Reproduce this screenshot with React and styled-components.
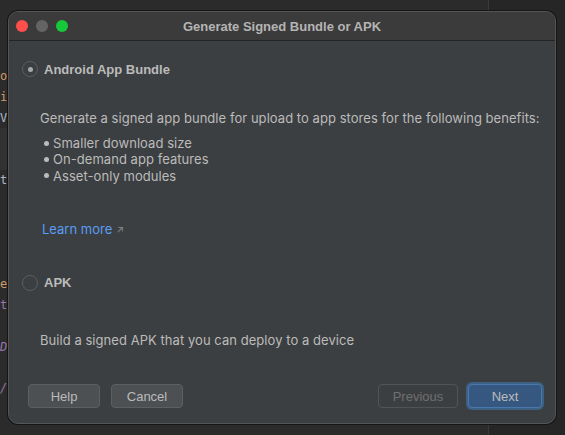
import React from "react";
import styled, { createGlobalStyle } from "styled-components";

const GlobalStyle = createGlobalStyle`
  html, body {
    margin: 0;
    padding: 0;
    background: #232323;
    font-family: "Liberation Sans", Arial, sans-serif;
    -webkit-font-smoothing: antialiased;
  }
`;

const Desktop = styled.div`
  position: relative;
  width: 565px;
  height: 435px;
  overflow: hidden;
  display: flex;
  background: #232323;
`;

const EditorPane = styled.div`
  width: 489px;
  height: 100%;
  background: #2b2b2b;
  border-right: 1px solid #3a3a3a;
  padding-top: 66px;
  box-sizing: border-box;
`;

const SidePane = styled.div`
  flex: 1;
  background: #262626;
`;

const CodeLine = styled.div`
  width: 8px;
  height: 20.8px;
  display: flex;
  align-items: center;
  white-space: nowrap;
  font-family: "DejaVu Sans Mono", monospace;
  font-size: 12px;
  font-style: ${(p) => (p.$italic ? "italic" : "normal")};
  color: ${(p) => p.$color || "#a9b7c6"};
  background: ${(p) => (p.$highlight ? "#323232" : "transparent")};
`;

const Dialog = styled.div`
  position: absolute;
  left: 8px;
  top: 11px;
  width: 548px;
  height: 413px;
  box-sizing: border-box;
  border-radius: 10px;
  border: 1px solid #555555;
  background: #3c3f41;
  overflow: hidden;
  display: flex;
  flex-direction: column;
  box-shadow: 0 0 0 1px #151515;
`;

const TitleBar = styled.div`
  height: 28px;
  flex: none;
  background: #3b3b3b;
  border-bottom: 1px solid #242424;
  display: flex;
  align-items: center;
  position: relative;
`;

const Lights = styled.div`
  display: flex;
  gap: 8px;
  padding-left: 7px;
`;

const Light = styled.span`
  width: 12px;
  height: 12px;
  border-radius: 50%;
  background: ${(p) => p.$color};
`;

const Title = styled.div`
  position: absolute;
  left: 0;
  right: 0;
  text-align: center;
  font-size: 13px;
  font-weight: bold;
  color: #b4b4b4;
  pointer-events: none;
`;

const Body = styled.div`
  flex: 1;
  display: flex;
  flex-direction: column;
  padding: 0 13px 0 13px;
  color: #bbbbbb;
  font-size: 13px;
`;

const OptionRow = styled.label`
  display: flex;
  align-items: center;
  gap: 6px;
  height: 16px;
  margin-top: ${(p) => p.$top}px;
  font-weight: bold;
  color: #bbbbbb;
`;

const Radio = styled.span`
  width: 14px;
  height: 14px;
  border-radius: 50%;
  border: 1px solid #5b5e60;
  background: #3c3f41;
  display: flex;
  align-items: center;
  justify-content: center;
  &::after {
    content: "";
    width: 5px;
    height: 5px;
    border-radius: 50%;
    background: #a8a8a8;
    display: ${(p) => (p.$checked ? "block" : "none")};
  }
`;

const Indented = styled.div`
  padding-left: 18px;
  margin-top: ${(p) => p.$top}px;
  line-height: 16px;
  font-family: Inter, "Liberation Sans", sans-serif;
  letter-spacing: 0.05px;
  white-space: nowrap;
`;

const List = styled.ul`
  list-style: none;
  margin: 9px 0 0 0;
  padding: 0 0 0 4px;
  line-height: 16.3px;
`;

const Item = styled.li`
  display: flex;
  align-items: center;
  gap: 4px;
  &::before {
    content: "";
    width: 5px;
    height: 5px;
    border-radius: 50%;
    background: #bbbbbb;
  }
`;

const LinkRow = styled.div`
  padding-left: 20px;
  margin-top: 37px;
  line-height: 16px;
  display: flex;
  align-items: center;
  gap: 4px;
  font-family: Inter, "Liberation Sans", sans-serif;
`;

const Link = styled.a`
  color: #589df6;
  text-decoration: none;
`;

const Arrow = styled.span`
  color: #8a8a8a;
  font-size: 10px;
`;

const Footer = styled.div`
  margin-top: auto;
  padding: 0 0 15px 6px;
  display: flex;
  align-items: center;
`;

const Button = styled.button`
  height: 24px;
  width: ${(p) => p.$w}px;
  margin-left: ${(p) => p.$ml || 0}px;
  box-sizing: border-box;
  border-radius: 4px;
  font-family: inherit;
  font-size: 13px;
  border: 1px solid ${(p) => (p.$primary ? "#4a78ad" : p.$disabled ? "#535353" : "#5d5f61")};
  background: ${(p) => (p.$primary ? "#365880" : p.$disabled ? "transparent" : "#4c5052")};
  color: ${(p) => (p.$disabled ? "#6f6f6f" : "#bbbbbb")};
  box-shadow: ${(p) => (p.$primary ? "0 0 0 2px #3d6185" : "none")};
  padding: 0;
`;

const Spacer = styled.div`
  flex: 1;
`;

const code = [
  { t: "o", c: "#d19a66" },
  { t: "i", c: "#d19a66" },
  { t: "V", c: "#a9b7c6" },
  { t: " ", h: true },
  { t: " ", h: true },
  { t: "t", c: "#a9b7c6" },
  { t: " " },
  { t: " " },
  { t: " " },
  { t: " " },
  { t: "e", c: "#d19a66" },
  { t: "t", c: "#9876aa" },
  { t: " " },
  { t: "D", c: "#9876aa", i: true },
  { t: " " },
  { t: "/", c: "#9876aa", i: true },
];

export default function App() {
  return (
    <>
      <GlobalStyle />
      <Desktop>
        <EditorPane>
          {code.map((l, i) => (
            <CodeLine key={i} $color={l.c} $italic={l.i} $highlight={l.h}>
              {l.t}
            </CodeLine>
          ))}
        </EditorPane>
        <SidePane />
        <Dialog>
          <TitleBar>
            <Lights>
              <Light $color="#fe4f4a" />
              <Light $color="#646464" />
              <Light $color="#16c93a" />
            </Lights>
            <Title>Generate Signed Bundle or APK</Title>
          </TitleBar>
          <Body>
            <OptionRow $top={20}>
              <Radio $checked />
              Android App Bundle
            </OptionRow>
            <Indented $top={33}>
              Generate a signed app bundle for upload to app stores for the following benefits:
              <List>
                <Item>Smaller download size</Item>
                <Item>On-demand app features</Item>
                <Item>Asset-only modules</Item>
              </List>
            </Indented>
            <LinkRow>
              <Link href="#">Learn more</Link>
              <Arrow>↗</Arrow>
            </LinkRow>
            <OptionRow $top={38}>
              <Radio />
              APK
            </OptionRow>
            <Indented $top={41}>Build a signed APK that you can deploy to a device</Indented>
            <Footer>
              <Button $w={72}>Help</Button>
              <Button $w={72} $ml={11}>Cancel</Button>
              <Spacer />
              <Button $w={80} $disabled>Previous</Button>
              <Button $w={74} $ml={10} $primary>Next</Button>
            </Footer>
          </Body>
        </Dialog>
      </Desktop>
    </>
  );
}
